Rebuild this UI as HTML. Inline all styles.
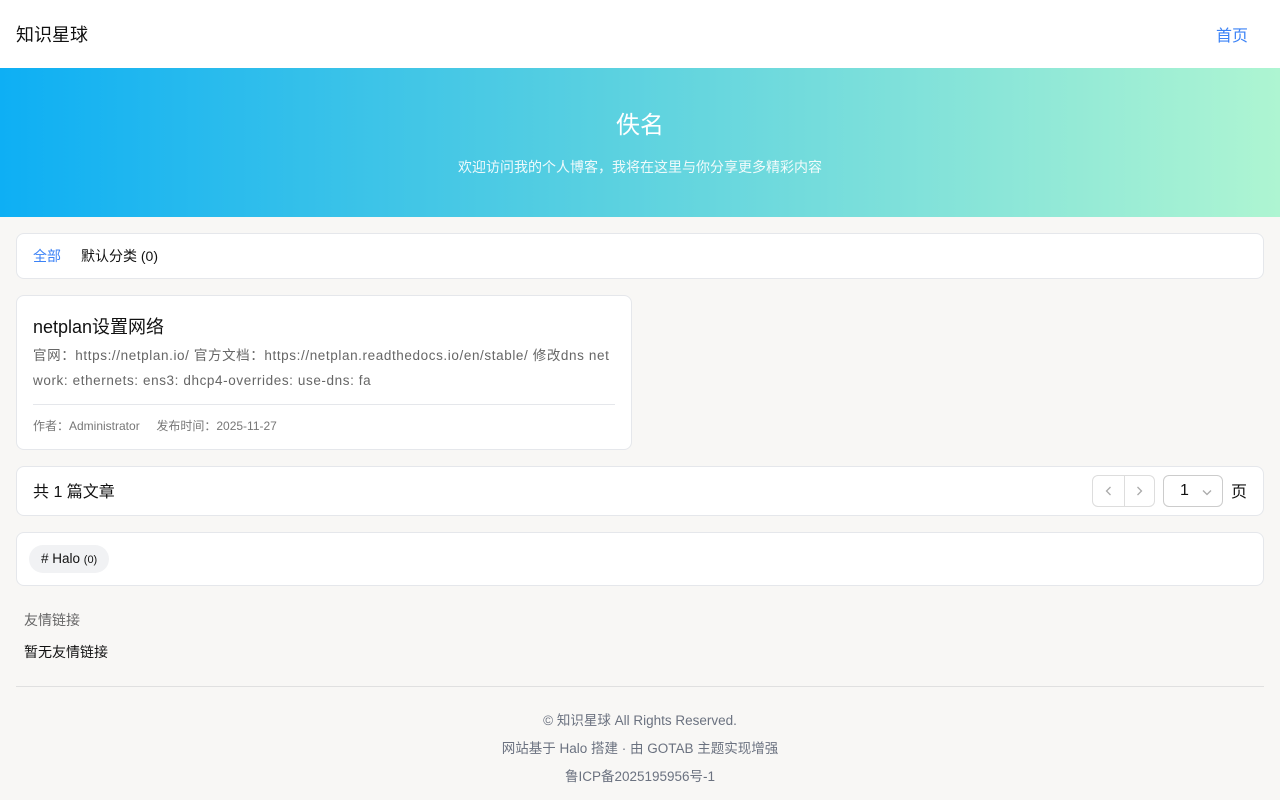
<!DOCTYPE html>
<html><head><meta charset="utf-8"><style>
*{box-sizing:border-box;margin:0;padding:0}
body{width:1280px;height:800px;background:#f8f7f5;font-family:"Liberation Sans","Noto Sans CJK SC",sans-serif;color:#111;overflow:hidden;position:relative}
.abs{position:absolute}
.hdr{left:0;top:0;width:1280px;height:68px;background:#fff}
.hero{left:0;top:68px;width:1280px;height:149px;background:linear-gradient(90deg,#0eaff4,#56cfe1 45%,#aef5d2);color:#fff;text-align:center}
.card{background:#fff;border:1px solid #e5e7eb;border-radius:8px}
</style></head><body>
<div class="abs hdr"><div class="abs" style="left:16px;top:21px;font-size:18px">知识星球</div><div class="abs" style="left:1216px;top:22px;font-size:16px;color:#3b82f6">首页</div></div>
<div class="abs hero"><div style="margin-top:37px;font-size:24px">佚名</div><div style="margin-top:17px;font-size:14px;opacity:.9">欢迎访问我的个人博客，我将在这里与你分享更多精彩内容</div></div>
<div class="abs card" style="left:16px;top:233px;width:1248px;height:46px;font-size:14px"><span class="abs" style="left:16px;top:12px;color:#3b82f6">全部</span><span class="abs" style="left:64px;top:12px">默认分类 (0)</span></div>
<div class="abs card" style="left:16px;top:295px;width:616px;height:155px">
<div class="abs" style="left:16px;top:17px;font-size:18px">netplan设置网络</div>
<div class="abs" style="left:16px;top:47px;width:590px;font-size:13.5px;line-height:25px;color:#666;white-space:nowrap;letter-spacing:0.6px">官网：https://netplan.io/ 官方文档：https://netplan.readthedocs.io/en/stable/ 修改dns net<br>work: ethernets: ens3: dhcp4-overrides: use-dns: fa</div>
<div class="abs" style="left:16px;top:108px;width:582px;border-top:1px solid #e5e7eb"></div>
<div class="abs" style="left:16px;top:121px;font-size:12px;color:#777">作者：Administrator&nbsp;&nbsp;&nbsp;&nbsp;&nbsp;发布时间：2025-11-27</div></div>
<div class="abs card" style="left:16px;top:466px;width:1248px;height:50px">
<div class="abs" style="left:16px;top:11px;font-size:16px">共 1 篇文章</div>
<div class="abs" style="left:1075px;top:8px;width:63px;height:32px;border:1px solid #ddd;border-radius:6px"><div class="abs" style="left:31px;top:0;height:30px;border-left:1px solid #ddd"></div>
<svg class="abs" style="left:10px;top:9px" width="12" height="12" viewBox="0 0 12 12"><path d="M7.5 2 L3.5 6 L7.5 10" fill="none" stroke="#aaa" stroke-width="1.3"/></svg>
<svg class="abs" style="left:40px;top:9px" width="12" height="12" viewBox="0 0 12 12"><path d="M4.5 2 L8.5 6 L4.5 10" fill="none" stroke="#aaa" stroke-width="1.3"/></svg></div>
<div class="abs" style="left:1146px;top:8px;width:60px;height:32px;border:1px solid #ccc;border-radius:6px"><span class="abs" style="left:16px;top:6px;font-size:16px">1</span>
<svg class="abs" style="left:37px;top:10px" width="12" height="12" viewBox="0 0 12 12"><path d="M2 4.5 L6 8.5 L10 4.5" fill="none" stroke="#aaa" stroke-width="1.3"/></svg></div>
<div class="abs" style="left:1214px;top:11px;font-size:16px">页</div></div>
<div class="abs card" style="left:16px;top:532px;width:1248px;height:54px"><div class="abs" style="left:12px;top:12px;height:28px;padding:0 12px;border-radius:14px;background:#f1f2f4;font-size:13.5px;line-height:28px"># Halo <span style="font-size:11px">(0)</span></div></div>
<div class="abs" style="left:24px;top:610px;font-size:14px;color:#666">友情链接</div>
<div class="abs" style="left:24px;top:642px;font-size:14px">暂无友情链接</div>
<div class="abs" style="left:16px;top:686px;width:1248px;border-top:1px solid #e0e0e0"></div>
<div class="abs" style="left:0;top:707px;width:1280px;text-align:center;font-size:13.5px;line-height:28px;color:#6b7280">© 知识星球 All Rights Reserved.<br>网站基于 Halo 搭建 · 由 GOTAB 主题实现增强<br>鲁ICP备2025195956号-1</div>
</body></html>
